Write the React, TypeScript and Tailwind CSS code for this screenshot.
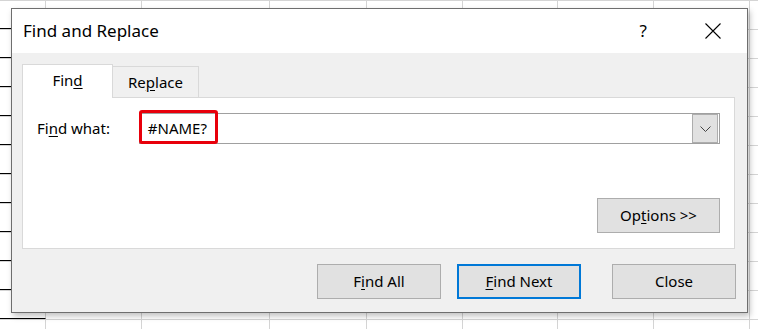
import React from 'react'

const cols = [46, 96, 128, 97, 96, 95, 96, 96, 30]

function SheetRow({ first }: { first?: boolean }) {
  return (
    <div className="flex h-[29px] shrink-0 border-b border-[#d4d4d4]">
      {cols.map((w, i) => (
        <div
          key={i}
          style={{ width: w }}
          className={
            i === 0
              ? 'shrink-0 border-b border-r border-b-black border-r-[#d4d4d4]'
              : first && (i === 2 || i === 3)
                ? 'shrink-0 border-b-2 border-r border-b-black border-r-[#d4d4d4]'
                : 'shrink-0 border-r border-[#d4d4d4]'
          }
        />
      ))}
    </div>
  )
}

function Btn({
  children,
  primary,
  className = '',
}: {
  children: React.ReactNode
  primary?: boolean
  className?: string
}) {
  return (
    <button
      className={
        'flex h-[35px] w-[124px] items-center justify-center bg-[#e1e1e1] text-[15px] text-black ' +
        (primary ? 'border-2 border-[#0078d7] ' : 'border border-[#adadad] ') +
        className
      }
    >
      {children}
    </button>
  )
}

export default function App() {
  return (
    <div
      className="relative h-[329px] w-[758px] overflow-hidden bg-white"
      style={{ fontFamily: '"Noto Sans", "Open Sans", Arial, sans-serif' }}
    >
      {/* spreadsheet behind the dialog */}
      <div className="-mt-[28px] flex flex-col">
        <SheetRow first />
        {Array.from({ length: 12 }).map((_, i) => (
          <SheetRow key={i} />
        ))}
      </div>

      {/* dialog */}
      <div className="absolute left-[11px] top-[8px] flex h-[305px] w-[737px] flex-col border border-[#6e6e6e] bg-[#f0f0f0] shadow-[2px_3px_6px_rgba(0,0,0,0.25)]">
        <div className="flex h-[44px] shrink-0 items-center bg-white pl-[11px] pr-[26px]">
          <span className="text-[17px] text-black">Find and Replace</span>
          <span className="ml-auto mr-[58px] text-[17px] text-black">?</span>
          <svg width="16" height="16" viewBox="0 0 16 16" className="text-black">
            <path d="M0.5 0.5 L15.5 15.5 M15.5 0.5 L0.5 15.5" stroke="currentColor" strokeWidth="1.1" />
          </svg>
        </div>

        <div className="flex flex-1 flex-col px-[10px] pt-[11px]">
          {/* tabs */}
          <div className="flex h-[33px] items-end">
            <div className="relative z-10 -mb-px flex h-[34px] w-[91px] items-center justify-center border border-b-0 border-[#d9d9d9] bg-white pb-[2px] text-[15px] text-black">
              Fin<u className="underline-offset-2">d</u>
            </div>
            <div className="flex h-[31px] w-[86px] items-center justify-center border border-b-0 border-l-0 border-[#d9d9d9] bg-[#f0f0f0] text-[15px] text-black">
              Re<u className="underline-offset-2">p</u>lace
            </div>
          </div>

          {/* panel */}
          <div className="flex h-[152px] w-[713px] flex-col border border-[#d9d9d9] bg-white px-[14px] pt-[15px]">
            <div className="flex items-center">
              <span className="w-[102px] text-[15px] text-black">
                Fi<u className="underline-offset-2">n</u>d what:
              </span>
              <div className="relative flex h-[31px] w-[582px] items-center border border-[#a0a0a0] bg-white">
                <span className="pl-[8px] text-[15px] text-black">#NAME?</span>
                <div className="ml-auto mr-px flex h-[29px] w-[26px] items-center justify-center border border-[#adadad] bg-[#e1e1e1]">
                  <svg width="11" height="6" viewBox="0 0 11 6">
                    <path d="M0.5 0.5 L5.5 5.5 L10.5 0.5" fill="none" stroke="#444" strokeWidth="1" />
                  </svg>
                </div>
                <div className="absolute left-[-1px] top-[-4px] h-[34px] w-[79px] rounded-[3px] border-[3px] border-[#e8000b]" />
              </div>
            </div>
            <div className="mt-[54px] flex justify-end">
              <button className="flex h-[35px] w-[123px] items-center justify-center border border-[#adadad] bg-[#e1e1e1] text-[15px] text-black">
                Op<u className="underline-offset-2">t</u>ions &gt;&gt;
              </button>
            </div>
          </div>

          {/* bottom buttons */}
          <div className="mt-[15px] flex justify-end pr-px">
            <Btn>
              F<u className="underline-offset-2">i</u>nd All
            </Btn>
            <Btn primary className="ml-[16px]">
              <u className="underline-offset-2">F</u>ind Next
            </Btn>
            <Btn className="ml-[31px]">Close</Btn>
          </div>
        </div>
      </div>
    </div>
  )
}
